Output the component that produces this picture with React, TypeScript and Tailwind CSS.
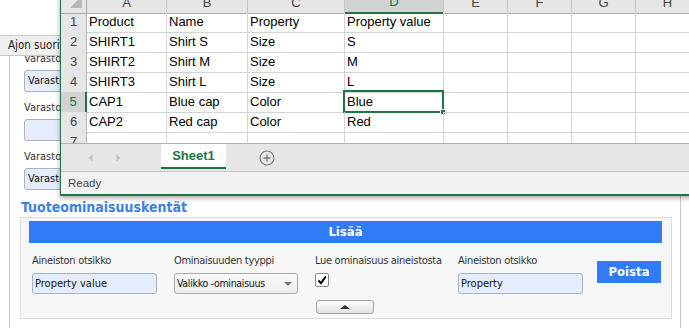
import React from 'react';

const rows = [
  ['Product', 'Name', 'Property', 'Property value'],
  ['SHIRT1', 'Shirt S', 'Size', 'S'],
  ['SHIRT2', 'Shirt M', 'Size', 'M'],
  ['SHIRT3', 'Shirt L', 'Size', 'L'],
  ['CAP1', 'Blue cap', 'Color', 'Blue'],
  ['CAP2', 'Red cap', 'Color', 'Red'],
];

const letters = ['A', 'B', 'C', 'D', 'E', 'F', 'G', 'H'];

const gridCols = 'grid grid-cols-[26px_80px_81px_97px_99px_64px_64px_64px_64px]';

function ExcelWindow() {
  return (
    <div className="absolute left-[60px] top-[-8px] w-[641px] border-l border-b-2 border-[#217346] bg-white shadow-[0_2px_5px_rgba(0,0,0,0.35)] font-['Liberation_Sans',Arial,sans-serif] text-[13px]">
      {/* column header */}
      <div className={`${gridCols} h-[20px]`}>
        <div className="relative bg-[#e6e6e6] border-r border-b border-[#ababab]">
          <svg className="absolute left-0 top-0" width="26" height="20" viewBox="0 0 26 20">
            <polygon points="9,16 21,16 21,4" fill="#b9b9b9" />
          </svg>
        </div>
        {letters.map((l) =>
          l === 'D' ? (
            <div
              key={l}
              className="flex items-center justify-center bg-[#d2d2d2] border-r border-[#c6c6c6] border-b-2 border-b-[#217346] text-[#217346]"
            >
              {l}
            </div>
          ) : (
            <div
              key={l}
              className="flex items-center justify-center bg-[#e6e6e6] border-r border-[#c6c6c6] border-b border-b-[#ababab] text-[#444]"
            >
              {l}
            </div>
          ),
        )}
      </div>

      {/* data rows */}
      {rows.map((r, i) => (
        <div key={i} className={`${gridCols} h-[20px]`}>
          {i === 4 ? (
            <div className="flex items-center justify-center bg-[#d2d2d2] border-r-2 border-r-[#217346] border-b border-[#c6c6c6] text-[#217346]">
              {i + 1}
            </div>
          ) : (
            <div className="flex items-center justify-center bg-[#e6e6e6] border-r border-r-[#b5b5b5] border-b border-[#d0d0d0] text-[#444]">
              {i + 1}
            </div>
          )}
          {letters.map((l, j) => (
            <div
              key={l}
              className="relative border-r border-b border-[#d4d4d4] pl-[2px] leading-[19px] text-black whitespace-nowrap"
            >
              {r[j] ?? ''}
              {i === 4 && l === 'D' && (
                <>
                  <div className="absolute -left-[2px] -top-[2px] -right-[1px] -bottom-[1px] border-2 border-[#217346]" />
                  <div className="absolute -right-[3px] -bottom-[3px] w-[6px] h-[6px] bg-[#217346] border border-white" />
                </>
              )}
            </div>
          ))}
        </div>
      ))}

      {/* partial row 7 */}
      <div className={`${gridCols} h-[11px] overflow-hidden`}>
        <div className="flex justify-center bg-[#e6e6e6] border-r border-r-[#b5b5b5] leading-[19px] text-[#444]">7</div>
        {letters.map((l) => (
          <div key={l} className="border-r border-[#d4d4d4]" />
        ))}
      </div>

      {/* sheet tabs */}
      <div className="flex h-[29px] bg-[#e6e6e6] border-t border-[#b0b0b0] border-b border-b-[#c6c6c6]">
        <div className="flex w-[100px] items-center">
          <svg className="ml-[27px]" width="5" height="8" viewBox="0 0 5 8">
            <polygon points="4.5,0.5 0.5,4 4.5,7.5" fill="#c2c2c2" />
          </svg>
          <svg className="ml-[23px]" width="5" height="8" viewBox="0 0 5 8">
            <polygon points="0.5,0.5 4.5,4 0.5,7.5" fill="#c2c2c2" />
          </svg>
        </div>
        <div className="flex h-[25px] w-[65px] items-center justify-center bg-white border-b-2 border-[#217346] font-bold text-[#217346]">
          Sheet1
        </div>
        <div className="flex items-center">
          <svg className="ml-[33px]" width="16" height="16" viewBox="0 0 16 16">
            <circle cx="8" cy="8" r="7" fill="none" stroke="#7d7d7d" strokeWidth="1.2" />
            <path d="M4.5 8h7M8 4.5v7" stroke="#7d7d7d" strokeWidth="1.3" />
          </svg>
        </div>
      </div>

      {/* status bar */}
      <div className="h-[22px] bg-[#f2f2f2] pl-[7px] text-[11.5px] leading-[22px] text-[#444]">Ready</div>
    </div>
  );
}

function FieldInput({ value, w }: { value: string; w: string }) {
  return (
    <div
      className={`${w} h-[21px] rounded-[3px] border border-[#a8b2c4] bg-[#e5ecfb] pl-[2px] leading-[19px] text-[#111] whitespace-nowrap overflow-hidden`}
    >
      {value}
    </div>
  );
}

export default function App() {
  return (
    <div className="relative w-[689px] h-[328px] overflow-hidden bg-white font-['DejaVu_Sans_Condensed','DejaVu_Sans',sans-serif] text-[11px] text-[#222]">
      <div className="h-[36px] border-b border-[#cfcfcf] bg-white" />
      <div className="flex h-[20px] items-center border-b border-[#c8c8c8] bg-[#efefef] pl-[8px] text-[11.5px] text-[#222] whitespace-nowrap">
        Ajon suoritukset
      </div>

      <div className="ml-[9px] w-[672px] h-[272px] overflow-hidden border-x border-[#c8c8c8] pl-[10px] pr-[8px]">
        <div className="pl-[4px]">
          {['Varastoalue', '', 'Varastopaikka'].map((v, i) => (
            <div key={i} className={i === 0 ? '-mt-[4px]' : 'mt-[9px]'}>
              <div className="h-[14px] leading-[14px] text-[#333] whitespace-nowrap">Varasto</div>
              <div className="mt-[4px] h-[22px] w-[200px] rounded-[3px] border border-[#a8b2c4] bg-[#e5ecfb] pl-[3px] leading-[20px] text-[#111]">
                {v}
              </div>
            </div>
          ))}
        </div>

        <div className="mt-[8px] h-[18px] pl-[1px] text-[14px] font-bold leading-[18px] text-[#3c80e6]">
          Tuoteominaisuuskentät
        </div>

        <div className="mt-[1px] h-[102px] border border-[#dcdcdc] bg-[#f7f7f7] pt-[3px] pl-[8px] pr-[9px]">
          <div className="flex h-[22px] items-center justify-center bg-[#2f7cf6] text-[13px] font-bold text-white">
            Lisää
          </div>
          <div className="flex pl-[3px] tracking-[-0.3px]">
            <div className="w-[142px] pt-[11px]">
              <div className="h-[14px] leading-[14px] text-[#333]">Aineiston otsikko</div>
              <div className="mt-[5px] tracking-normal">
                <FieldInput value="Property value" w="w-[125px]" />
              </div>
            </div>
            <div className="w-[141px] pt-[11px]">
              <div className="h-[14px] leading-[14px] text-[#333]">Ominaisuuden tyyppi</div>
              <div className="relative mt-[5px] h-[21px] w-[124px] rounded-[3px] border border-[#a9a9a9] bg-gradient-to-b from-[#fbfbfb] to-[#ececec] pl-[2px] text-[10.5px] leading-[19px] text-[#111]">
                Valikko -ominaisuus
                <svg className="absolute right-[5px] top-[8px]" width="8" height="4" viewBox="0 0 8 4">
                  <polygon points="0,0 8,0 4,4" fill="#7a7a7a" />
                </svg>
              </div>
            </div>
            <div className="w-[143px] pt-[11px]">
              <div className="h-[14px] leading-[14px] text-[#333] whitespace-nowrap">Lue ominaisuus aineistosta</div>
              <div className="mt-[5px] flex h-[14px] w-[14px] items-center justify-center rounded-[2px] border border-[#8a8a8a] bg-white">
                <svg width="12" height="12" viewBox="0 0 12 12">
                  <path d="M2.5 6.5 L5 9.2 L9.8 2.5" fill="none" stroke="#000" strokeWidth="2" />
                </svg>
              </div>
              <div className="ml-[1px] mt-[13px] flex h-[14px] w-[58px] items-center justify-center rounded-[3px] border border-[#a5a5a5] bg-gradient-to-b from-[#fdfdfd] to-[#e2e2e2]">
                <svg width="10" height="4" viewBox="0 0 10 4">
                  <polygon points="0,4 10,4 5,0" fill="#333" />
                </svg>
              </div>
            </div>
            <div className="w-[139px] pt-[11px]">
              <div className="h-[14px] leading-[14px] text-[#333]">Aineiston otsikko</div>
              <div className="mt-[5px] tracking-normal">
                <FieldInput value="Property" w="w-[125px]" />
              </div>
            </div>
            <div className="pt-[18px] tracking-normal">
              <div className="flex h-[22px] w-[64px] items-center justify-center bg-[#2f7cf6] text-[13px] font-bold text-white">
                Poista
              </div>
            </div>
          </div>
        </div>
      </div>

      <ExcelWindow />
    </div>
  );
}
